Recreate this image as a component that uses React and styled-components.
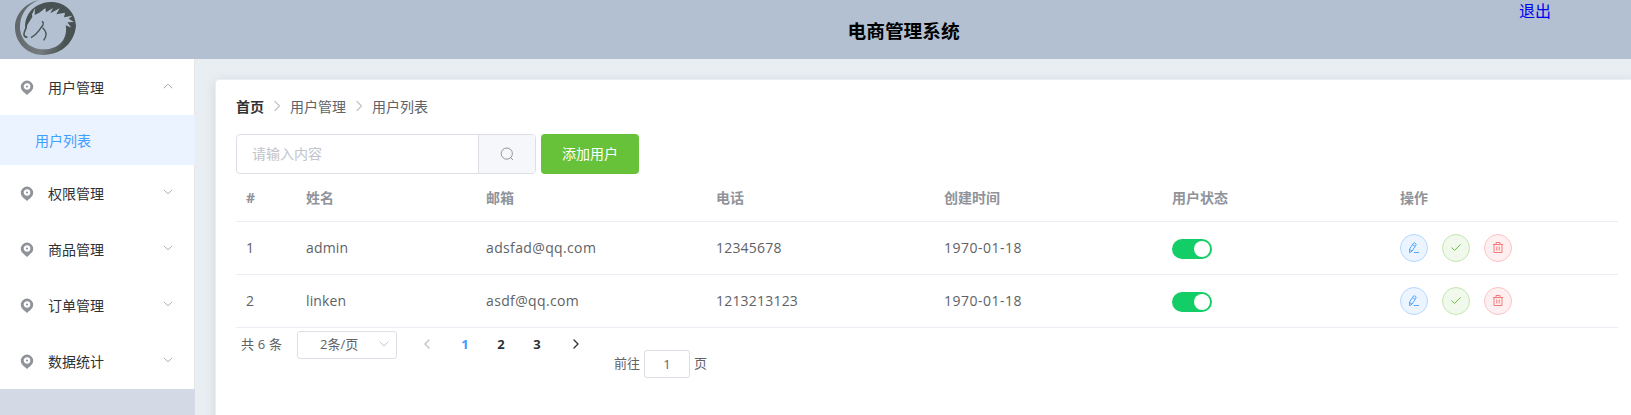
import React from "react";
import styled, { createGlobalStyle } from "styled-components";

const GlobalStyle = createGlobalStyle`
  * { box-sizing: border-box; }
  html, body, #root { height: 100%; }
  body {
    margin: 0;
    overflow: hidden;
    font-family: "Open Sans", "Noto Sans CJK SC", sans-serif;
    font-size: 14px;
    color: #606266;
  }
`;

const Page = styled.div`
  display: flex;
  flex-direction: column;
  height: 100%;
`;

const Header = styled.header`
  display: flex;
  flex: none;
  height: 59px;
  background: #b3c0d1;
`;

const LogoCell = styled.div`
  width: 270px;
  svg { display: block; }
`;

const Title = styled.h3`
  flex: 1;
  margin: 0 0 0 577.5px;
  font-size: 18.72px;
  line-height: 62px;
  color: #000;
`;

const Logout = styled.a`
  margin-right: 80px;
  font-size: 16px;
  line-height: 22px;
  color: #0000ee;
  text-decoration: none;
`;

const Body = styled.div`
  display: flex;
  flex: 1;
  min-height: 0;
`;

const Sidebar = styled.aside`
  flex: none;
  width: 195px;
  background: #d3dae5;
`;

const Menu = styled.nav`
  background: #fff;
  border-right: 1px solid #e6e6e6;
`;

const MenuItem = styled.div`
  display: flex;
  align-items: center;
  height: 56px;
  padding: 0 20px 0 20px;
  color: #303133;
  span { flex: 1; margin-left: 14px; }
`;

const SubItem = styled.div`
  height: 50px;
  margin-right: -1px;
  padding-left: 35px;
  line-height: 51px;
  color: #409eff;
  background: #eaf3ff;
`;

const Main = styled.main`
  flex: 1;
  min-width: 0;
  padding: 20px 0 0 20px;
  overflow: hidden;
  background: #e9eef2;
`;

const Card = styled.section`
  height: 460px;
  margin-right: -7px;
  padding: 20px;
  background: #fff;
  border: 1px solid #ebeef5;
  border-radius: 4px;
  box-shadow: 0 2px 12px rgba(0, 0, 0, 0.1);
`;

const Breadcrumb = styled.div`
  display: flex;
  align-items: center;
  height: 12px;
  margin-bottom: 22px;
  svg { margin: 0 8px; }
`;

const Home = styled.b`
  color: #303133;
`;

const Toolbar = styled.div`
  display: flex;
  gap: 5px;
  height: 40px;
`;

const Search = styled.div`
  display: flex;
  width: 300px;
  overflow: hidden;
  border: 1px solid #dcdfe6;
  border-radius: 4px;
`;

const SearchText = styled.div`
  flex: 1;
  padding-left: 15px;
  line-height: 38px;
  color: #c0c4cc;
`;

const SearchButton = styled.div`
  display: flex;
  align-items: center;
  justify-content: center;
  width: 57px;
  background: #f5f7fa;
  border-left: 1px solid #dcdfe6;
`;

const AddButton = styled.div`
  width: 98px;
  line-height: 40px;
  text-align: center;
  color: #fff;
  background: #67c23a;
  border-radius: 4px;
`;

const Row = styled.div`
  display: grid;
  grid-template-columns: 60px 180px 230px 228px 228px 228px 228px;
  align-items: center;
  width: 1382px;
  height: ${(p) => (p.$head ? 48 : 53)}px;
  border-bottom: 1px solid #ebeef5;
  color: ${(p) => (p.$head ? "#909399" : "#606266")};
  font-weight: ${(p) => (p.$head ? 700 : 400)};
`;

const Cell = styled.div`
  padding-left: 10px;
  line-height: 23px;
  letter-spacing: ${(p) => p.$tracking || 0}px;
`;

const TextCell = styled(Cell)`
  padding-bottom: 2px;
`;

const Switch = styled.div`
  display: flex;
  justify-content: flex-end;
  width: 40px;
  height: 20px;
  margin-top: 2px;
  padding: 2px;
  background: #13ce66;
  border-radius: 10px;
  &::after {
    content: "";
    width: 16px;
    height: 16px;
    background: #fff;
    border-radius: 50%;
  }
`;

const Actions = styled.div`
  display: flex;
  gap: 14px;
`;

const tones = {
  edit: ["#409eff", "#ecf5ff", "#b3d8ff"],
  check: ["#67c23a", "#f0f9eb", "#c2e7b0"],
  remove: ["#f56c6c", "#fef0f0", "#fbc4c4"],
};

const RoundButton = styled.div`
  display: flex;
  align-items: center;
  justify-content: center;
  width: 28px;
  height: 28px;
  color: ${(p) => tones[p.$tone][0]};
  background: ${(p) => tones[p.$tone][1]};
  border: 1px solid ${(p) => tones[p.$tone][2]};
  border-radius: 50%;
`;

const Pagination = styled.div`
  display: flex;
  align-items: flex-start;
  padding: 3px 0 0 5px;
  font-size: 13px;
  line-height: 26px;
`;

const Total = styled.span`
  width: 56px;
  white-space: nowrap;
  letter-spacing: 0.2px;
`;

const SizeSelect = styled.div`
  display: flex;
  align-items: center;
  justify-content: space-between;
  width: 100px;
  height: 28px;
  margin-right: 10px;
  padding: 0 7px 2px 22px;
  line-height: 24px;
  border: 1px solid #dcdfe6;
  border-radius: 3px;
`;

const Arrow = styled.div`
  display: flex;
  align-items: center;
  justify-content: center;
  width: 39px;
  height: 26px;
`;

const Pager = styled.div`
  display: flex;
  margin: 0 1px;
`;

const PageNumber = styled.div`
  width: 36px;
  text-align: center;
  font-weight: 700;
  color: ${(p) => (p.$active ? "#409eff" : "#303133")};
`;

const Jump = styled.div`
  display: flex;
  gap: 4px;
  margin: 19px 0 0 19px;
  line-height: 27px;
`;

const JumpInput = styled.div`
  width: 46px;
  height: 28px;
  text-align: center;
  border: 1px solid #dcdfe6;
  border-radius: 3px;
`;

const Chevron = ({ d, w, h, color, weight = 1 }) => (
  <svg width={w} height={h} viewBox={`0 0 ${w} ${h}`} fill="none" stroke={color} strokeWidth={weight}>
    <path d={d} strokeLinecap="round" strokeLinejoin="round" />
  </svg>
);

const Logo = () => (
  <svg width="90" height="59" viewBox="0 0 270 177">
    <defs>
      <linearGradient id="ring" x1="0" y1="0" x2="1" y2="0.3">
        <stop offset="0" stopColor="#5c6266" />
        <stop offset="0.65" stopColor="#747b7e" />
        <stop offset="1" stopColor="#48504f" />
      </linearGradient>
    </defs>
    <path
      fill="url(#ring)"
      d="M116 0C74 10 44 44 45 84C46 132 85 165 130 165C180 164 217 135 226 88L198 78C202 119 176 148 132 148C90 148 60 119 60 80C60 44 81 14 116 0Z"
    />
    <path
      fill="#485252"
      d="M76 84C72 49 99 8 151 6C195 5 226 35 228 78C225 105 210 132 181 149C200 124 203 104 197 76L214 83L202 67L222 66L206 56L217 47L192 52L195 38L169 43L179 25L151 40L159 24L138 37L136 24L118 38L104 45L105 25L96 43L97 51Z"
    />
    <path fill="none" stroke="#485252" strokeWidth="5" d="M79 76C80 88 71 92 72 104Q75 114 82 110" />
    <path fill="none" stroke="#485252" strokeWidth="4" d="M93 113Q110 104 123 83Q130 78 130 68L126 64M128 83Q143 98 136 112L131 121" />
  </svg>
);

const Pin = () => (
  <svg width="14" height="16" viewBox="0 0 14 16">
    <path fill="#909399" d="M7 1.6a6.2 6.2 0 0 1 6.2 6.2C13.2 11.6 9.8 13.2 7 16C4.2 13.2 .8 11.6 .8 7.8A6.2 6.2 0 0 1 7 1.6Z" />
    <circle cx="7" cy="7.5" r="2.2" fill="#909399" stroke="#fff" strokeWidth="2.2" />
  </svg>
);

const SearchIcon = () => (
  <svg width="14" height="14" viewBox="0 0 14 14" fill="none" stroke="#909399">
    <circle cx="6.8" cy="6.6" r="5.6" />
    <path d="M10.8 10.8L12.8 12.8" strokeLinecap="round" />
  </svg>
);

const EditIcon = () => (
  <svg width="12" height="12" viewBox="0 0 12 12" fill="none" stroke="currentColor" strokeWidth=".9">
    <path d="M5.2 1.4Q6.2.3 7.4 1.2Q8.5 2 7.8 3.3L4.2 9L1.6 10.7L1.5 7.2ZM4.5 2.6L7.1 4.3M1.6 7.4L4 9M5.8 10.5H11" />
  </svg>
);

const CheckIcon = () => (
  <svg width="12" height="12" viewBox="0 0 12 12" fill="none" stroke="currentColor">
    <path d="M1.5 5.5L4.6 8.4L10.6 2.4" />
  </svg>
);

const TrashIcon = () => (
  <svg width="12" height="12" viewBox="0 0 12 12" fill="none" stroke="currentColor" strokeWidth=".9">
    <path d="M1 2.5H11M2 2.5V10.5H10V2.5M4 2.5V.5H8V2.5M4.8 4.5V8.5M7.2 4.5V8.5" />
  </svg>
);

const users = [
  { id: 1, name: "admin", email: "adsfad@qq.com", phone: "12345678", created: "1970-01-18" },
  { id: 2, name: "linken", email: "asdf@qq.com", phone: "1213213123", created: "1970-01-18" },
];

const MenuEntry = ({ label, open }) => (
  <MenuItem>
    <Pin />
    <span>{label}</span>
    <Chevron w={12} h={10} color="#a3a5aa" weight={0.9} d={open ? "M2 6L6 2.2L10 6" : "M2 2L6 5.8L10 2"} />
  </MenuItem>
);

export default function App() {
  return (
    <Page>
      <GlobalStyle />
      <Header>
        <LogoCell><Logo /></LogoCell>
        <Title>电商管理系统</Title>
        <Logout>退出</Logout>
      </Header>
      <Body>
        <Sidebar>
          <Menu>
            <MenuEntry label="用户管理" open />
            <SubItem>用户列表</SubItem>
            {["权限管理", "商品管理", "订单管理", "数据统计"].map((label) => (
              <MenuEntry key={label} label={label} />
            ))}
          </Menu>
        </Sidebar>
        <Main>
          <Card>
            <Breadcrumb>
              <Home>首页</Home>
              <Chevron w={10} h={12} color="#c0c4cc" weight={1.2} d="M3 1.5L7.5 6L3 10.5" />
              用户管理
              <Chevron w={10} h={12} color="#c0c4cc" weight={1.2} d="M3 1.5L7.5 6L3 10.5" />
              用户列表
            </Breadcrumb>
            <Toolbar>
              <Search>
                <SearchText>请输入内容</SearchText>
                <SearchButton><SearchIcon /></SearchButton>
              </Search>
              <AddButton>添加用户</AddButton>
            </Toolbar>
            <Row $head>
              {["#", "姓名", "邮箱", "电话", "创建时间", "用户状态", "操作"].map((label) => (
                <Cell key={label}>{label}</Cell>
              ))}
            </Row>
            {users.map((user) => (
              <Row key={user.id}>
                <TextCell>{user.id}</TextCell>
                <TextCell $tracking={0.15}>{user.name}</TextCell>
                <TextCell $tracking={0.36}>{user.email}</TextCell>
                <TextCell $tracking={0.2}>{user.phone}</TextCell>
                <TextCell $tracking={0.5}>{user.created}</TextCell>
                <Cell><Switch /></Cell>
                <Cell>
                  <Actions>
                    <RoundButton $tone="edit"><EditIcon /></RoundButton>
                    <RoundButton $tone="check"><CheckIcon /></RoundButton>
                    <RoundButton $tone="remove"><TrashIcon /></RoundButton>
                  </Actions>
                </Cell>
              </Row>
            ))}
            <Pagination>
              <Total>共 6 条</Total>
              <SizeSelect>
                2条/页
                <Chevron w={10} h={8} color="#c0c4cc" d="M1 2L5 6L9 2" />
              </SizeSelect>
              <Arrow><Chevron w={8} h={10} color="#c0c4cc" weight={1.5} d="M6 1L2 5L6 9" /></Arrow>
              <Pager>
                <PageNumber $active>1</PageNumber>
                <PageNumber>2</PageNumber>
                <PageNumber>3</PageNumber>
              </Pager>
              <Arrow><Chevron w={8} h={10} color="#303133" weight={1.3} d="M2 1L6 5L2 9" /></Arrow>
              <Jump>
                前往
                <JumpInput>1</JumpInput>
                页
              </Jump>
            </Pagination>
          </Card>
        </Main>
      </Body>
    </Page>
  );
}
